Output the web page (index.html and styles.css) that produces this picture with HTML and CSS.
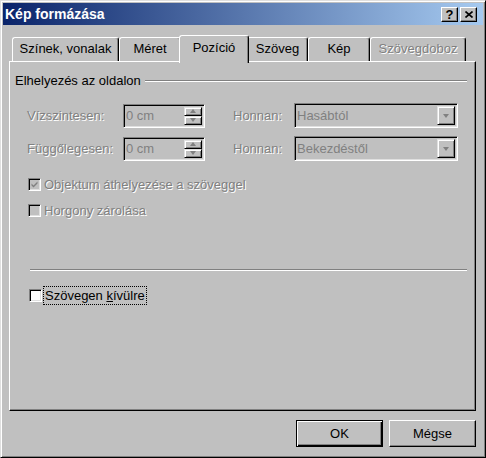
FILE: index.html
```html
<!DOCTYPE html>
<html lang="hu">
    <head>
        <meta charset="UTF-8">
        <title>Kép formázása</title>
        <link rel="stylesheet" href="styles.css">
    </head>
    <body>
        <div class="window">
            <div class="titlebar">
                <span class="title">Kép formázása</span>
                <div class="caption-btns">
                    <span class="cap-btn help">?</span>
                    <span class="cap-btn close">
                        <svg width="8" height="7" viewBox="0 0 8 7"><path d="M0.5 0.5 L7.5 6.5 M7.5 0.5 L0.5 6.5" stroke="#000" stroke-width="1.6" fill="none"/></svg>
                    </span>
                </div>
            </div>

            <div class="client">
                <div class="tabs">
                    <div class="tab t1">Színek, vonalak</div>
                    <div class="tab t2">Méret</div>
                    <div class="tab t3 active">Pozíció</div>
                    <div class="tab t4">Szöveg</div>
                    <div class="tab t5">Kép</div>
                    <div class="tab t6 disabled">Szövegdoboz</div>
                </div>

                <div class="panel">
                    <div class="group-head">
                        <span>Elhelyezés az oldalon</span>
                        <div class="etch"></div>
                    </div>

                    <div class="pos-row first">
                        <span class="lbl dis">Vízszintesen:</span>
                        <div class="spin">
                            <span class="val">0 cm</span>
                            <div class="spin-btns">
                                <span class="sb"><i class="arr up"></i></span>
                                <span class="sb"><i class="arr down"></i></span>
                            </div>
                        </div>
                        <span class="lbl dis">Honnan:</span>
                        <div class="combo">
                            <span class="val">Hasábtól</span>
                            <span class="drop"><i class="arr down"></i></span>
                        </div>
                    </div>

                    <div class="pos-row second">
                        <span class="lbl dis">Függőlegesen:</span>
                        <div class="spin">
                            <span class="val">0 cm</span>
                            <div class="spin-btns">
                                <span class="sb"><i class="arr up"></i></span>
                                <span class="sb"><i class="arr down"></i></span>
                            </div>
                        </div>
                        <span class="lbl dis">Honnan:</span>
                        <div class="combo">
                            <span class="val">Bekezdéstől</span>
                            <span class="drop"><i class="arr down"></i></span>
                        </div>
                    </div>

                    <div class="check-row cb1">
                        <span class="box dis">
                            <svg width="9" height="9" viewBox="0 0 9 9"><path d="M1.5 3.5 L3.5 5.5 L7.5 1.5 L7.5 3.5 L3.5 7.5 L1.5 5.5 Z" fill="#808080"/></svg>
                        </span>
                        <span class="lbl dis">Objektum áthelyezése a szöveggel</span>
                    </div>

                    <div class="check-row cb2">
                        <span class="box dis"></span>
                        <span class="lbl dis">Horgony zárolása</span>
                    </div>

                    <div class="sep"></div>

                    <div class="check-row cb3">
                        <span class="box"></span>
                        <span class="focus">Szövegen <u>k</u>ívülre</span>
                    </div>
                </div>

                <div class="buttons">
                    <div class="btn default">OK</div>
                    <div class="btn">Mégse</div>
                </div>
            </div>
        </div>
    </body>
</html>
```

FILE: styles.css
```css
* {
    box-sizing: border-box;
}

body {
    margin: 0;
    background-color: #c0c0c0;
    font-family: "Liberation Sans", Arial, sans-serif;
    font-size: 13px;
    color: #000;
}

/* ablak keret */
.window {
    width: 486px;
    height: 458px;
    background-color: #c0c0c0;
    border: 1px solid;
    border-color: #dfdfdf #000 #000 #dfdfdf;
    box-shadow: inset 1px 1px #fff, inset -1px -1px #808080;
    padding: 2px;
}

.titlebar {
    height: 22px;
    display: flex;
    align-items: center;
    justify-content: space-between;
    padding: 0 6px 0 2px;
    background: linear-gradient(to right, #0a246a, #a6caf0);
}

.title {
    color: #fff;
    font-weight: bold;
    font-size: 14px;
}

.caption-btns {
    display: flex;
    gap: 2px;
}

.cap-btn {
    width: 17px;
    height: 15px;
    background-color: #c0c0c0;
    border: 1px solid;
    border-color: #fff #000 #000 #fff;
    box-shadow: inset -1px -1px #808080;
    display: flex;
    align-items: center;
    justify-content: center;
    font-weight: bold;
    font-size: 13px;
    line-height: 1;
}

.client {
    padding: 10px 7px 0 6px;
}

/* fülek */
.tabs {
    display: flex;
    align-items: flex-end;
    height: 26px;
    padding-left: 3px;
}

.tab {
    height: 24px;
    border: 1px solid;
    border-bottom: none;
    border-color: #fff #000 transparent #fff;
    box-shadow: inset -1px 0 #808080;
    border-radius: 3px 3px 0 0;
    text-align: center;
    line-height: 22px;
}

.t1 { width: 107px; }
.t2 { width: 62px; }
.t3 { width: 66px; }
.t4 { width: 61px; }
.t5 { width: 62px; }
.t6 { width: 96px; }

.tab.active {
    width: 70px;
    height: 28px;
    margin: 0 -2px -2px;
    position: relative;
    z-index: 1;
    background-color: #c0c0c0;
    line-height: 24px;
}

.tab.disabled {
    color: #808080;
    text-shadow: 1px 1px 0 #fff;
}

.panel {
    height: 350px;
    border: 1px solid;
    border-color: #fff #000 #000 #fff;
    box-shadow: inset -1px -1px #808080;
    display: flex;
    flex-direction: column;
}

.group-head {
    display: flex;
    align-items: center;
    height: 15px;
    margin-top: 11px;
    padding-left: 5px;
}

.etch {
    flex: 1;
    height: 2px;
    margin: 0 8px 0 4px;
    border-top: 1px solid #808080;
    border-bottom: 1px solid #fff;
}

.dis {
    color: #808080;
    text-shadow: 1px 1px 0 #fff;
}

.pos-row {
    display: grid;
    grid-template-columns: 96px 110px 61px 164px;
    align-items: center;
    height: 25px;
    padding-left: 17px;
}

.pos-row.first { margin-top: 15px; }
.pos-row.second { margin-top: 8px; }

.spin, .combo {
    height: 24px;
    display: flex;
    align-items: center;
    justify-content: space-between;
    border: 1px solid;
    border-color: #808080 #fff #fff #808080;
    box-shadow: inset 1px 1px #000, inset -1px -1px #dfdfdf;
    padding: 2px;
    color: #808080;
}

.spin {
    width: 82px;
}

.combo {
    width: 164px;
    height: 25px;
}

.val {
    padding-left: 0;
    align-self: center;
}

.spin-btns {
    display: flex;
    flex-direction: column;
    width: 18px;
    height: 100%;
}

.sb, .drop {
    flex: 1;
    display: flex;
    align-items: center;
    justify-content: center;
    background-color: #c0c0c0;
    border: 1px solid;
    border-color: #dfdfdf #000 #000 #dfdfdf;
    box-shadow: inset 1px 1px #fff, inset -1px -1px #808080;
}

.drop {
    flex: none;
    width: 18px;
    height: 100%;
}

.arr {
    width: 0;
    height: 0;
    border-left: 3.5px solid transparent;
    border-right: 3.5px solid transparent;
}

.arr.up {
    border-bottom: 4px solid #808080;
}

.arr.down {
    border-top: 4px solid #808080;
}

.check-row {
    display: flex;
    align-items: center;
    height: 15px;
    padding-left: 18px;
}

.cb1 { margin-top: 16px; }
.cb2 { margin-top: 11px; }

.box {
    width: 13px;
    height: 13px;
    margin-right: 3px;
    border: 1px solid;
    border-color: #808080 #fff #fff #808080;
    box-shadow: inset 1px 1px #000, inset -1px -1px #dfdfdf;
    background-color: #fff;
    display: flex;
    align-items: center;
    justify-content: center;
}

.box.dis {
    background-color: #c0c0c0;
}

.sep {
    height: 2px;
    margin: 51px 8px 0 20px;
    border-top: 1px solid #808080;
    border-bottom: 1px solid #fff;
}

.cb3 {
    margin-top: 15px;
    height: 19px;
    padding-left: 19px;
}

.cb3 .box {
    margin-right: 1px;
}

.focus {
    height: 19px;
    line-height: 17px;
    border: 1px dotted #000;
    padding: 0 1px;
}

/* gombok */
.buttons {
    display: flex;
    justify-content: flex-end;
    gap: 6px;
    margin-top: 9px;
}

.btn {
    width: 87px;
    height: 27px;
    border: 1px solid;
    border-color: #fff #000 #000 #fff;
    box-shadow: inset -1px -1px #808080;
    display: flex;
    align-items: center;
    justify-content: center;
}

.btn.default {
    border-color: #000;
    box-shadow: inset 1px 1px #fff, inset -1px -1px #000, inset -2px -2px #808080;
}
```
